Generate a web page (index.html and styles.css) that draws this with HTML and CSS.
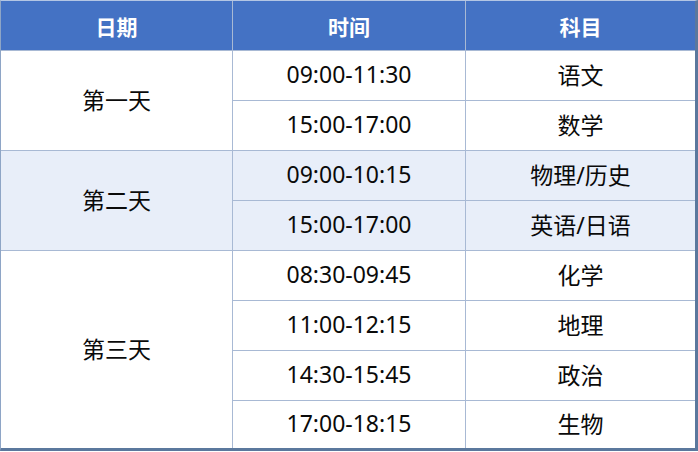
FILE: index.html
```html
<!DOCTYPE html>
<html lang="zh-CN">
<head>
<meta charset="utf-8">
<title>考试安排</title>
<link rel="stylesheet" href="styles.css">
</head>
<body>
<div class="schedule">
  <div class="head">日期</div>
  <div class="head">时间</div>
  <div class="head">科目</div>

  <div class="cell day span2">第一天</div>
  <div class="cell">09:00-11:30</div>
  <div class="cell">语文</div>
  <div class="cell">15:00-17:00</div>
  <div class="cell">数学</div>

  <div class="cell day span2 alt">第二天</div>
  <div class="cell alt">09:00-10:15</div>
  <div class="cell alt">物理/历史</div>
  <div class="cell alt">15:00-17:00</div>
  <div class="cell alt">英语/日语</div>

  <div class="cell day span4">第三天</div>
  <div class="cell">08:30-09:45</div>
  <div class="cell">化学</div>
  <div class="cell">11:00-12:15</div>
  <div class="cell">地理</div>
  <div class="cell">14:30-15:45</div>
  <div class="cell">政治</div>
  <div class="cell">17:00-18:15</div>
  <div class="cell">生物</div>
</div>
</body>
</html>
```
FILE: styles.css
```css
html, body {
  margin: 0;
  padding: 0;
  background: #ffffff;
}

.schedule {
  width: 698px;
  box-sizing: border-box;
  display: grid;
  grid-template-columns: 231px 232px 1fr;
  grid-template-rows: 49px repeat(7, 49px) 47px;
  gap: 1px;
  background: #a8b9d4;
  border-top: 1px solid #b4c6e4;
  border-left: 1px solid #8ea5c6;
  border-right: 3px solid #5b789d;
  border-bottom: 3px solid #5b789d;
  font-family: "Noto Sans", "Noto Sans CJK SC", sans-serif;
}

.head {
  background: #4472c4;
  color: #ffffff;
  font-weight: bold;
  font-size: 21px;
  display: flex;
  align-items: center;
  justify-content: center;
  padding-top: 1px;
  box-sizing: border-box;
}

.cell {
  background: #ffffff;
  color: #0a0a0a;
  font-size: 23px;
  display: flex;
  align-items: center;
  justify-content: center;
  padding-bottom: 3px;
  box-sizing: border-box;
}

.cell.alt {
  background: #e8eef9;
}

.span2 {
  grid-row: span 2;
}

.span4 {
  grid-row: span 4;
}
```
